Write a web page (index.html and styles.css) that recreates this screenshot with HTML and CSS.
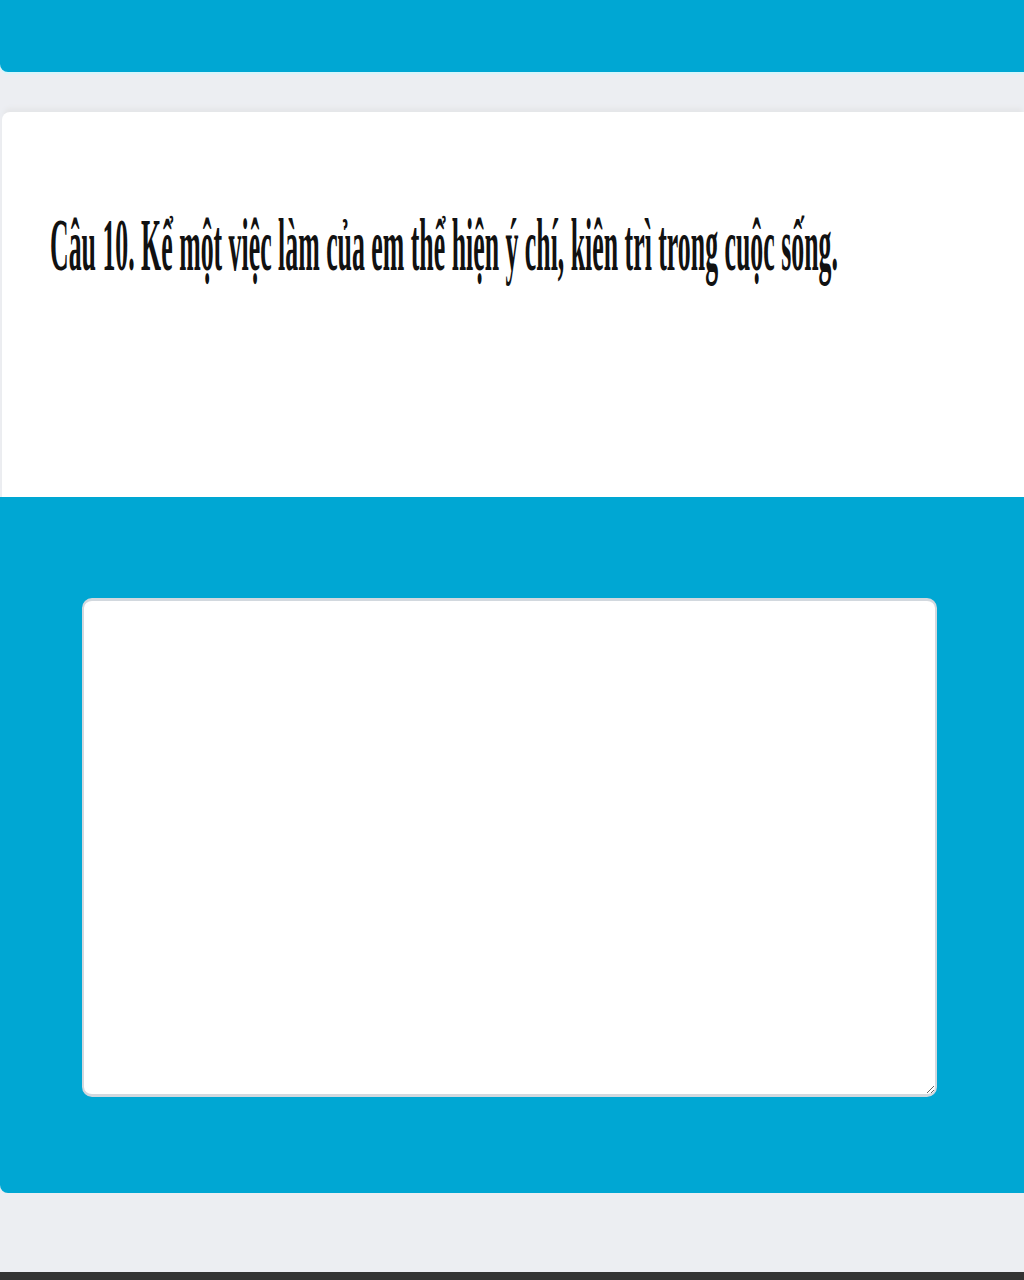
FILE: index.html
```html
<!DOCTYPE html>
<html lang="vi">
<head>
<meta charset="utf-8">
<title>Câu 10</title>
<link rel="stylesheet" href="styles.css">
</head>
<body>
<div class="page">
  <div class="topbar"></div>
  <div class="card">
    <h1 class="question"><span class="qtext">Câu 10. Kể một việc làm của em thể hiện ý chí, kiên trì trong cuộc sống.</span></h1>
  </div>
  <div class="answer">
    <textarea class="answer-box"></textarea>
  </div>
  <div class="footer-gap"></div>
  <div class="bottom-bar"></div>
</div>
</body>
</html>
```
FILE: styles.css
```css
html, body {
  margin: 0;
  padding: 0;
}
body {
  background: #eceef2;
  font-family: "Liberation Serif", "Times New Roman", serif;
}
.page {
  width: 1024px;
  height: 1280px;
  display: flex;
  flex-direction: column;
  overflow: hidden;
}
.topbar {
  height: 72px;
  background: #00a7d3;
  border-bottom-left-radius: 8px;
  box-shadow: 0 2px 1px #d6f6fc;
  flex: none;
}
.card {
  margin-top: 40px;
  margin-left: 2px;
  height: 385px;
  background: #ffffff;
  border-top-left-radius: 8px;
  box-shadow: 0 -6px 4px -2px #e5e6e8;
  flex: none;
  box-sizing: border-box;
  padding-top: 93px;
  padding-left: 48px;
}
.question {
  margin: 0;
  font-size: 74px;
  line-height: 80px;
  font-weight: bold;
  color: #111;
  white-space: nowrap;
}
.qtext {
  display: inline-block;
  transform: scaleX(0.349);
  transform-origin: left center;
}
.answer {
  height: 696px;
  background: #00a7d3;
  border-bottom-left-radius: 8px;
  flex: none;
  box-sizing: border-box;
  padding: 101px 87px 96px 82px;
  display: flex;
}
.answer-box {
  flex: 1;
  margin: 0;
  box-sizing: border-box;
  border: 3px solid #d2d8de;
  border-left-width: 2px;
  border-right-width: 2px;
  border-radius: 10px;
  background: #fff;
  resize: both;
  outline: none;
}
.footer-gap {
  flex: 1;
}
.bottom-bar {
  height: 8px;
  background: #333;
  flex: none;
}
```
